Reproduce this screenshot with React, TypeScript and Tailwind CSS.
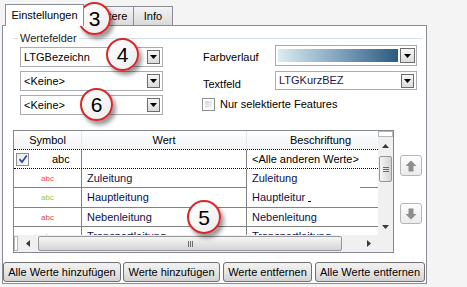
import React from 'react';

const DropButton = ({ className = '' }: { className?: string }) => (
    <div className={`flex items-center justify-center w-[13px] h-[14px] border border-[#6c6c6c] bg-gradient-to-b from-[#f6f6f6] to-[#dcdcdc] shrink-0 ${className}`}>
        <svg width="7" height="4" viewBox="0 0 7 4"><path d="M0 0h7L3.5 4z" fill="#000" /></svg>
    </div>
);

const Combo = ({ text, className = '', textClass = '' }: { text: string; className?: string; textClass?: string }) => (
    <div className={`flex items-center border border-[#a9abb0] bg-white pl-[3px] pr-[2px] ${className}`}>
        <span className={`flex-1 truncate ${textClass}`}>{text}</span>
        <DropButton />
    </div>
);

const Circle = ({ n, className }: { n: string; className: string }) => (
    <div className={`absolute flex items-center justify-center rounded-full border-[2px] border-[#d8262b] bg-gradient-to-br from-white to-[#ececec] shadow-[3px_4px_4px_rgba(0,0,0,0.4)] text-[21px] leading-none text-black ${className}`}>
        {n}
    </div>
);

const ArrowBtn = ({ up, className }: { up: boolean; className: string }) => (
    <div className={`flex items-center justify-center w-[22px] h-[21px] rounded-[3px] border border-[#b6b6b6] bg-gradient-to-b from-[#fdfdfd] to-[#ebebeb] ${className}`}>
        <svg width="12" height="12" viewBox="0 0 12 12">
            {up
                ? <path d="M6 0.5L11.5 6H8.5V11.5H3.5V6H0.5Z" fill="#8e8e8e" />
                : <path d="M6 11.5L11.5 6H8.5V0.5H3.5V6H0.5Z" fill="#8e8e8e" />}
        </svg>
    </div>
);

const rows = [
    { color: 'text-[#ff4a4a]', wert: 'Zuleitung', h: 'h-[19px]' },
    { color: 'text-[#9cc83c]', wert: 'Hauptleitung', h: 'h-[20px]' },
    { color: 'text-[#d04848]', wert: 'Nebenleitung', h: 'h-[19px]' },
    { color: 'text-[#8fa2bf]', wert: 'Transportleitung', h: 'h-[19px]' },
];

const App: React.FC = () => {
    return (
        <div className="relative w-[467px] h-[287px] overflow-hidden bg-[#f4f4f4] font-['Liberation_Sans',Arial,sans-serif] text-[11px] leading-[13px] text-black">
            {/* tabs */}
            <div className="flex items-end h-[25px] pl-[5px]">
                <div className="relative z-10 -mb-px h-[22px] w-[79px] flex items-center justify-center pb-[1px] border border-b-0 border-[#898c95] bg-white">
                    Einstellungen
                </div>
                <div className="-ml-px h-[19px] w-[51px] flex items-center justify-center border border-b-0 border-[#898c95] bg-gradient-to-b from-[#f4f4f4] to-[#dadada]">
                    Weitere
                </div>
                <div className="-ml-px h-[19px] w-[40px] flex items-center justify-center border border-b-0 border-[#898c95] bg-gradient-to-b from-[#f4f4f4] to-[#dadada]">
                    Info
                </div>
            </div>

            {/* tab page */}
            <div className="ml-[2px] w-[425px] h-[259px] border border-[#898c95] bg-white flex flex-col">
                <div className="mt-[5px] ml-[10px] w-[409px] h-[14px] flex items-center text-[#1e1e1e]">
                    <div className="w-[5px] h-px bg-[#d5dfe5]" />
                    <span className="px-[2px]">Wertefelder</span>
                    <div className="flex-1 h-px bg-[#d5dfe5]" />
                </div>

                <div className="flex">
                    <div className="ml-[17px] mt-[2px] w-[143px] flex flex-col gap-[4px]">
                        <Combo text="LTGBezeichn" className="h-[20px]" />
                        <Combo text="<Keine>" className="h-[20px]" />
                        <Combo text="<Keine>" className="h-[20px]" />
                    </div>
                    <div className="ml-[40px] flex flex-col">
                        <div className="flex items-center h-[21px]">
                            <span className="w-[72px] pt-[3px]">Farbverlauf</span>
                            <div className="w-[142px] h-[21px] flex items-center border border-[#a9abb0] bg-white pl-[2px] pr-[1px]">
                                <div className="flex-1 h-[13px] mr-[2px] bg-gradient-to-r from-[#dcebf0] via-[#82a5bf] to-[#2c5a82]" />
                                <DropButton className="h-[15px] w-[15px] border-[#4a4a4a]" />
                            </div>
                        </div>
                        <div className="flex mt-[5px] h-[19px]">
                            <span className="w-[72px] pt-[7px]">Textfeld</span>
                            <Combo text="LTGKurzBEZ" className="w-[142px] h-[19px]" textClass="text-[#2b1840]" />
                        </div>
                        <div className="flex items-center mt-[8px] -ml-px h-[13px]">
                            <div className="w-[13px] h-[13px] border border-[#8e8f8f] p-[2px] bg-white">
                                <div className="w-full h-full bg-gradient-to-br from-[#d6d6d6] to-[#f8f8f8]" />
                            </div>
                            <span className="ml-[5px]">Nur selektierte Features</span>
                        </div>
                    </div>
                </div>

                {/* list */}
                <div className="flex mt-[15px] ml-[10px]">
                    <div className="w-[381px] h-[123px] border border-[#828790] flex flex-col bg-white">
                        <div className="flex h-[104px]">
                            <div className="w-[364px] overflow-hidden flex flex-col">
                                <div className="flex h-[18px] shrink-0 bg-gradient-to-b from-white to-[#f1f2f4]">
                                    <div className="w-[68px] shrink-0 flex items-center justify-center border-r border-[#e3e5e8]">Symbol</div>
                                    <div className="w-[165px] shrink-0 flex items-center justify-center border-r border-[#e3e5e8]">Wert</div>
                                    <div className="w-[147px] shrink-0 flex items-center justify-center">Beschriftung</div>
                                </div>
                                <div className="flex h-[20px] shrink-0 border-y border-dotted border-black">
                                    <div className="w-[68px] shrink-0 flex items-center border-r border-[#808080]">
                                        <div className="ml-[2px] w-[13px] h-[13px] border border-[#8e8f8f] bg-gradient-to-br from-[#e8e8e8] to-white flex items-center justify-center">
                                            <svg width="10" height="10" viewBox="0 0 10 10"><path d="M1.5 5.2L4 8L8.8 1.5" stroke="#2a4fa8" strokeWidth="1.8" fill="none" /></svg>
                                        </div>
                                        <span className="ml-[23px]">abc</span>
                                    </div>
                                    <div className="w-[165px] shrink-0 border-r border-[#808080]" />
                                    <div className="w-[147px] shrink-0 flex items-center pl-[5px]">&lt;Alle anderen Werte&gt;</div>
                                </div>
                                {rows.map((r, i) => (
                                    <div key={i} className={`flex shrink-0 ${r.h}`}>
                                        <div className="w-[68px] shrink-0 flex items-center justify-center border-r border-b border-[#808080]">
                                            <span className={`text-[8px] ${r.color}`}>abc</span>
                                        </div>
                                        <div className="w-[165px] shrink-0 flex items-center pl-[5px] border-r border-b border-[#808080] text-[#10104a]">{r.wert}</div>
                                        {i === 0 ? (
                                            <div className="w-[147px] shrink-0 flex flex-col">
                                                <span className="flex-1 flex items-center pl-[5px] text-[#10104a]">{r.wert}</span>
                                                <div className="ml-[113px] w-[18px] h-px bg-[#808080]" />
                                            </div>
                                        ) : i === 1 ? (
                                            <div className="w-[147px] shrink-0 flex items-center pl-[5px] border-b border-[#808080] text-[#10104a]">
                                                <span>Hauptleitur</span>
                                                <span className="ml-[3px] mt-[8px] w-[3px] h-px bg-black" />
                                            </div>
                                        ) : (
                                            <div className="w-[147px] shrink-0 flex items-center pl-[5px] border-b border-[#808080] text-[#10104a]">{r.wert}</div>
                                        )}
                                    </div>
                                ))}
                            </div>
                            {/* vertical scrollbar */}
                            <div className="w-[15px] flex flex-col bg-[#f0f0f0]">
                                <div className="h-[6px] border border-[#b8b8b8] bg-white" />
                                <div className="h-[17px] flex items-center justify-center">
                                    <svg width="7" height="4" viewBox="0 0 7 4"><path d="M0 4h7L3.5 0z" fill="#3a3a3a" /></svg>
                                </div>
                                <div className="h-[2px]" />
                                <div className="mx-auto w-[13px] h-[26px] rounded-[2px] border border-[#979797] bg-gradient-to-r from-[#f6f6f6] to-[#d4d4d4] flex flex-col items-center justify-center gap-[1px]">
                                    <div className="w-[6px] h-px bg-[#6a6a6a]" />
                                    <div className="w-[6px] h-px bg-[#6a6a6a]" />
                                    <div className="w-[6px] h-px bg-[#6a6a6a]" />
                                </div>
                                <div className="flex-1" />
                                <div className="h-[17px] flex items-center justify-center">
                                    <svg width="7" height="4" viewBox="0 0 7 4"><path d="M0 0h7L3.5 4z" fill="#3a3a3a" /></svg>
                                </div>
                            </div>
                        </div>
                        {/* horizontal scrollbar */}
                        <div className="flex h-[17px]">
                            <div className="w-[364px] flex items-center bg-[#f0f0f0]">
                                <div className="w-[4px] h-[15px] border border-[#b8b8b8] bg-white" />
                                <div className="w-[19px] flex items-center justify-center">
                                    <svg width="4" height="7" viewBox="0 0 4 7"><path d="M4 0v7L0 3.5z" fill="#3a3a3a" /></svg>
                                </div>
                                <div className="ml-px w-[304px] h-[15px] rounded-[2px] border border-[#979797] bg-gradient-to-b from-[#f6f6f6] to-[#d4d4d4] flex items-center justify-center gap-[1px]">
                                    <div className="w-px h-[6px] bg-[#6a6a6a]" />
                                    <div className="w-px h-[6px] bg-[#6a6a6a]" />
                                    <div className="w-px h-[6px] bg-[#6a6a6a]" />
                                </div>
                                <div className="w-[17px]" />
                                <div className="w-[19px] flex items-center justify-center">
                                    <svg width="4" height="7" viewBox="0 0 4 7"><path d="M0 0v7L4 3.5z" fill="#3a3a3a" /></svg>
                                </div>
                            </div>
                            <div className="w-[15px] bg-[#f0f0f0]" />
                        </div>
                    </div>
                    <div className="ml-[6px] flex flex-col">
                        <ArrowBtn up className="mt-[25px]" />
                        <ArrowBtn up={false} className="mt-[27px]" />
                    </div>
                </div>

                {/* buttons */}
                <div className="flex mt-[9px]">
                    {[
                        ['Alle Werte hinzufügen', 'w-[118px]'],
                        ['Werte hinzufügen', 'ml-[2px] w-[97px]'],
                        ['Werte entfernen', 'ml-[3px] w-[89px]'],
                        ['Alle Werte entfernen', 'ml-[3px] w-[110px]'],
                    ].map(([label, cls]) => (
                        <div key={label} className={`h-[20px] flex items-center justify-center rounded-[3px] border border-[#707070] bg-gradient-to-b from-[#f2f2f2] via-[#e6e6e6] to-[#d2d2d2] ${cls}`}>
                            {label}
                        </div>
                    ))}
                </div>
            </div>

            <Circle n="3" className="left-[78px] top-[2px] w-[33px] h-[33px]" />
            <Circle n="4" className="left-[106px] top-[38px] w-[33px] h-[33px]" />
            <Circle n="6" className="left-[80px] top-[88px] w-[33px] h-[33px]" />
            <Circle n="5" className="left-[187px] top-[200px] w-[34px] h-[34px]" />
        </div>
    );
};

export default App;
